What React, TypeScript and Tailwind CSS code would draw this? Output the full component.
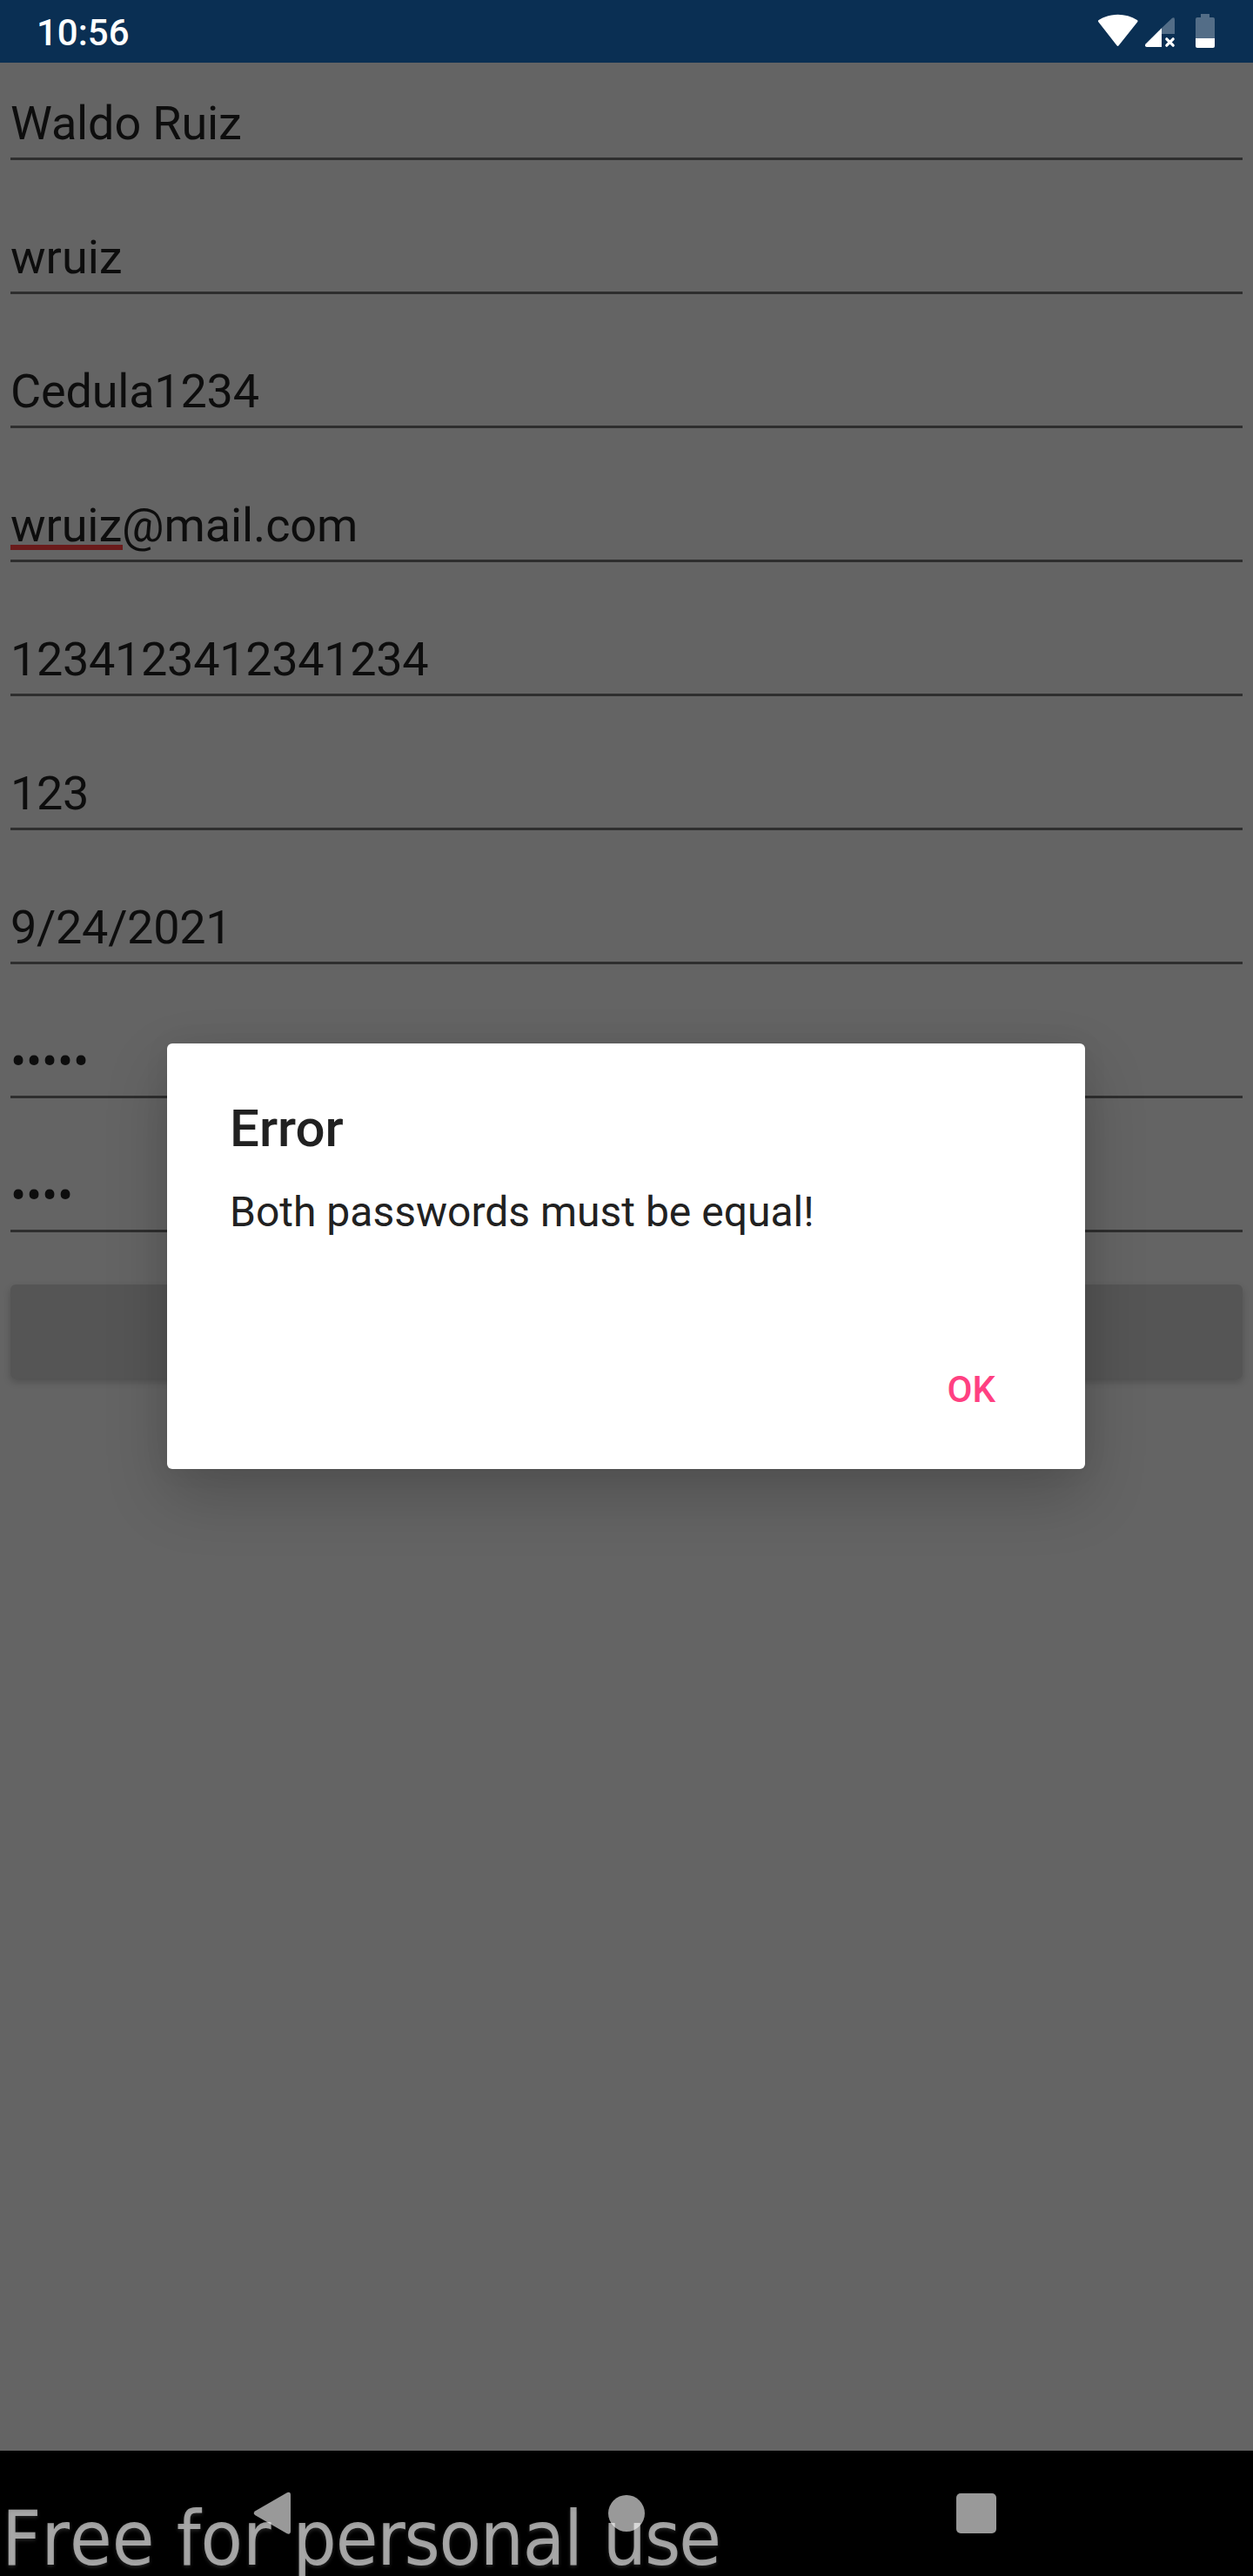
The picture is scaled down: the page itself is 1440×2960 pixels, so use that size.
type FieldProps = { value: string; spacing: string; misspelled?: boolean };

const fields: FieldProps[] = [
  { value: "Waldo Ruiz", spacing: "tracking-[-0.15px]" },
  { value: "wruiz", spacing: "tracking-[0px]" },
  { value: "Cedula1234", spacing: "tracking-[-0.2px]" },
  { value: "wruiz@mail.com", spacing: "tracking-[-0.1px]", misspelled: true },
  { value: "1234123412341234", spacing: "tracking-[-0.33px]" },
  { value: "123", spacing: "tracking-[-0.33px]" },
  { value: "9/24/2021", spacing: "tracking-[-0.3px]" },
  { value: "•••••", spacing: "tracking-[-0.2px]" },
  { value: "••••", spacing: "tracking-[-0.2px]" },
];

function Field({ value, spacing, misspelled }: FieldProps) {
  return (
    <div className="flex h-[112px] items-end border-b-[3px] border-[#2e2e2e] pb-[7px]">
      <span className={"relative whitespace-pre text-[54px] leading-[64px] text-[#0d0d0d] " + spacing}>
        {value}
        {misspelled && <i className="absolute bottom-[4px] left-0 h-[6px] w-[129px] bg-[#6a1b1b]" />}
      </span>
    </div>
  );
}

function StatusBar() {
  return (
    <header className="flex h-[72px] shrink-0 items-start justify-between bg-[#0a2f53] pl-[42px] pr-[44px]">
      <span className="pt-[13px] text-[42px] font-medium leading-[50px] text-white">10:56</span>
      <svg width="134" height="40" viewBox="0 0 134 40" className="mt-[16px]" fill="#fff">
        <path d="M0.4 9.2C-0.3 8.5-0.2 7.6 0.7 7C13.8-1.2 31.7-1.2 44.8 7C45.7 7.6 45.8 8.5 45.2 9.2L23.7 36.3C23 37.2 22.2 37.2 21.5 36.3Z" />
        <path d="M85.1 4.7Q88 3 88 6.5V23H73V16.3Z" fillOpacity=".3" />
        <path d="M73 16.3V38H55.8Q52.8 37 54.6 34.4Z" />
        <path d="M78.8 28.8L86.2 36.2M86.2 28.8L78.8 36.2" stroke="#fff" strokeWidth="3.2" strokeLinecap="round" />
        <path d="M118 0H128V4H132Q134 4 134 6V28H112V6Q112 4 114 4H118Z" fillOpacity=".3" />
        <path d="M112 28H134V37Q134 39 132 39H114Q112 39 112 37Z" />
      </svg>
    </header>
  );
}

function NavigationBar() {
  return (
    <footer className="relative flex h-[144px] shrink-0 items-center overflow-hidden bg-black">
      <svg width="44" height="50" viewBox="0 0 44 50" className="ml-[291px]" fill="#999">
        <path d="M2 22.5L38.8 1.2Q43 -0.2 43 4V45.5Q43 49.7 38.8 48.3L2 27Q-0.6 24.8 2 22.5Z" />
      </svg>
      <div className="ml-[364px] size-[42px] rounded-full bg-[#999]" />
      <div className="ml-[358px] size-[46px] rounded-[5px] bg-[#999]" />
      <span className="absolute left-[2px] top-[50px] whitespace-pre font-['DejaVu_Sans_Condensed','DejaVu_Sans',sans-serif] text-[88px] leading-[102px] text-white/60 [font-kerning:none] [font-stretch:condensed] [text-shadow:0_2px_4px_rgba(255,255,255,0.15)]">
        {"Free for "}
        <span className="tracking-[-1.2px]">{"personal "}</span>
        <span className="tracking-[-2px]">use</span>
      </span>
    </footer>
  );
}

function ErrorDialog() {
  return (
    <section
      role="alertdialog"
      className="absolute left-[192px] top-[1199px] flex h-[489px] w-[1055px] flex-col rounded-[6px] bg-white pl-[72px] pr-[103px] shadow-[0_30px_72px_rgba(0,0,0,0.2),0_0_32px_rgba(0,0,0,0.05)]"
    >
      <h1 className="mt-[63px] text-[60px] font-medium leading-[70px] text-[#212121]">Error</h1>
      <p className="mt-[33px] whitespace-nowrap text-[48px] leading-[56px] text-[#212121]">Both passwords must be equal!</p>
      <button className="mt-[151px] self-end text-[42px] font-medium leading-[50px] text-[#ff4081]">OK</button>
    </section>
  );
}

export default function App() {
  return (
    <div className="relative flex h-[2960px] w-[1440px] flex-col overflow-hidden bg-[#646464] font-[Roboto,sans-serif]">
      <StatusBar />
      <main className="flex grow flex-col px-[12px]">
        <div className="flex flex-col gap-[42px]">
          {fields.map((field, index) => (
            <Field key={index} {...field} />
          ))}
        </div>
        <button className="mt-[60px] h-[108px] rounded-[6px] bg-[#555] shadow-[0_4px_8px_rgba(0,0,0,0.2)]" />
      </main>
      <NavigationBar />
      <ErrorDialog />
    </div>
  );
}
